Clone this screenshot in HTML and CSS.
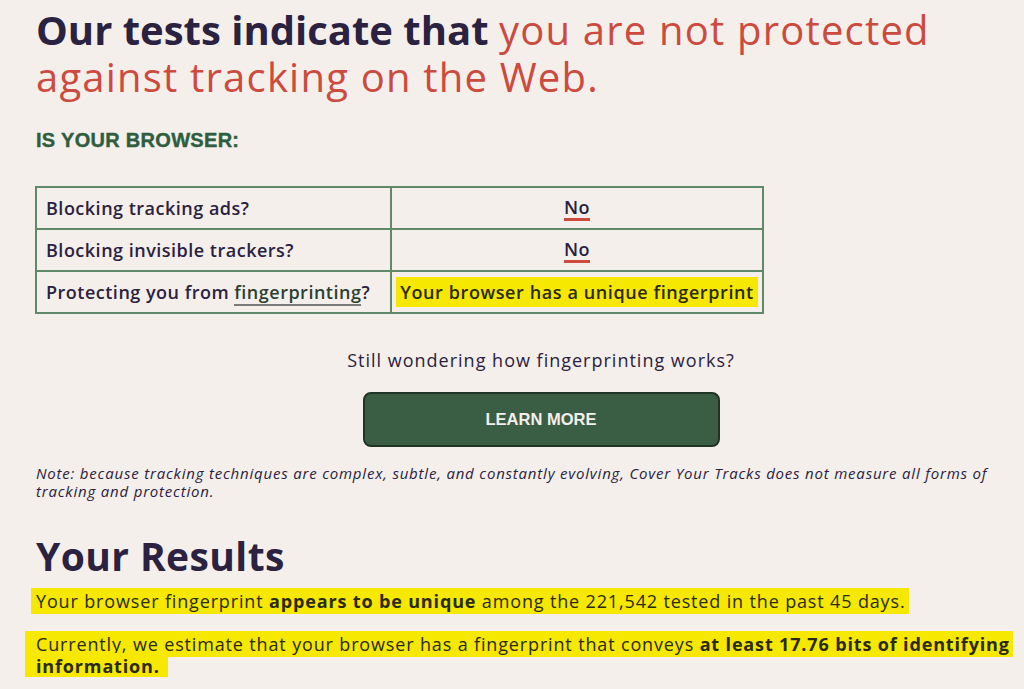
FILE: index.html
```html
<!DOCTYPE html>
<html>
<head>
<meta charset="utf-8">
<link rel="stylesheet" href="styles.css">
</head>
<body>
<main class="page">
  <h1 class="headline">Our tests indicate that <span class="warn">you are not protected against tracking on the Web.</span></h1>
  <h3 class="subhead">IS YOUR BROWSER:</h3>
  <table class="results-table">
    <tr>
      <td class="q">Blocking tracking ads?</td>
      <td class="a"><span class="no">No</span></td>
    </tr>
    <tr>
      <td class="q">Blocking invisible trackers?</td>
      <td class="a"><span class="no">No</span></td>
    </tr>
    <tr>
      <td class="q">Protecting you from <a class="fp-link">fingerprinting</a>?</td>
      <td class="a"><span class="hl">Your browser has a unique fingerprint</span></td>
    </tr>
  </table>
  <div class="learn">
    <p class="wonder">Still wondering how fingerprinting works?</p>
    <button class="learn-btn">LEARN MORE</button>
  </div>
  <p class="note">Note: because tracking techniques are complex, subtle, and constantly evolving, Cover Your Tracks does not measure all forms of tracking and protection.</p>
  <h2 class="results-title">Your Results</h2>
  <p class="result first"><span class="hl">Your browser fingerprint <b>appears to be unique</b> among the 221,542 tested in the past 45 days.</span></p>
  <p class="result second"><span class="hl">Currently, we estimate that your browser has a fingerprint that conveys <b>at least 17.76 bits of identifying information.</b>&nbsp;</span></p>
</main>
</body>
</html>
```

FILE: styles.css
```css
html, body {
  margin: 0;
  padding: 0;
  background: #f4efeb;
  overflow: hidden;
}
body {
  font-family: "Open Sans", "Liberation Sans", sans-serif;
  color: #2a2240;
}
.page {
  width: 1010px;
  margin-left: 36px;
  padding-top: 6px;
}
.headline {
  margin: 0;
  font-size: 40px;
  line-height: 47px;
  font-weight: 700;
  color: #2a2240;
}
.headline .warn {
  font-weight: 400;
  color: #cc4a3e;
  letter-spacing: 1.2px;
}
.subhead {
  margin: 28px 0 0;
  font-family: "Liberation Sans", Arial, sans-serif;
  font-size: 20px;
  line-height: 24px;
  font-weight: 700;
  letter-spacing: 0.3px;
  color: #2f5d3f;
  -webkit-text-stroke: 0.4px #2f5d3f;
}
.results-table {
  margin-top: 34px;
  margin-left: -1px;
  border-collapse: collapse;
  width: 729px;
  border: 2px solid #5e8a6a;
}
.results-table td {
  border: 2px solid #5e8a6a;
  height: 40px;
  padding: 0 9px;
  font-size: 18px;
  font-weight: 600;
  letter-spacing: 0.5px;
}
.results-table td.q {
  width: 335px;
}
.results-table td.a {
  text-align: center;
  padding: 0 4px;
}
.no {
  display: inline-block;
  line-height: 21px;
  border-bottom: 3px solid #cc4a3e;
}
.fp-link {
  color: #2b3f32;
  border-bottom: 2px solid #7a7a7a;
}
.hl {
  background: #f6e800;
  color: #2a2a10;
}
.results-table .hl {
  display: inline-block;
  padding: 3px 4px;
  letter-spacing: 0.6px;
}
.learn {
  display: flex;
  flex-direction: column;
  align-items: center;
}
.wonder {
  margin: 34px 0 0;
  font-size: 18px;
  line-height: 24px;
  letter-spacing: 1px;
}
.learn-btn {
  margin-top: 20px;
  width: 357px;
  height: 55px;
  background: #3a5e44;
  border: 2px solid #1f3424;
  border-radius: 8px;
  color: #f4efeb;
  font-family: "Liberation Sans", Arial, sans-serif;
  font-weight: 700;
  font-size: 16.5px;
}
.note {
  margin: 17px 0 0;
  font-size: 15px;
  line-height: 18px;
  font-style: italic;
  letter-spacing: 0.8px;
  width: 960px;
}
.results-title {
  margin: 34px 0 0;
  font-size: 39px;
  line-height: 44px;
  font-weight: 700;
  letter-spacing: 0.4px;
}
.result {
  margin: 12px 0 0;
  font-size: 18px;
  line-height: 22px;
  letter-spacing: 0.85px;
}
.result + .result {
  margin-top: 21px;
}
.result .hl {
  padding: 1px 3px 1px 5px;
  margin-left: -5px;
  -webkit-box-decoration-break: clone;
  box-decoration-break: clone;
}
.result.second .hl {
  padding-left: 11px;
  margin-left: -11px;
}
```
